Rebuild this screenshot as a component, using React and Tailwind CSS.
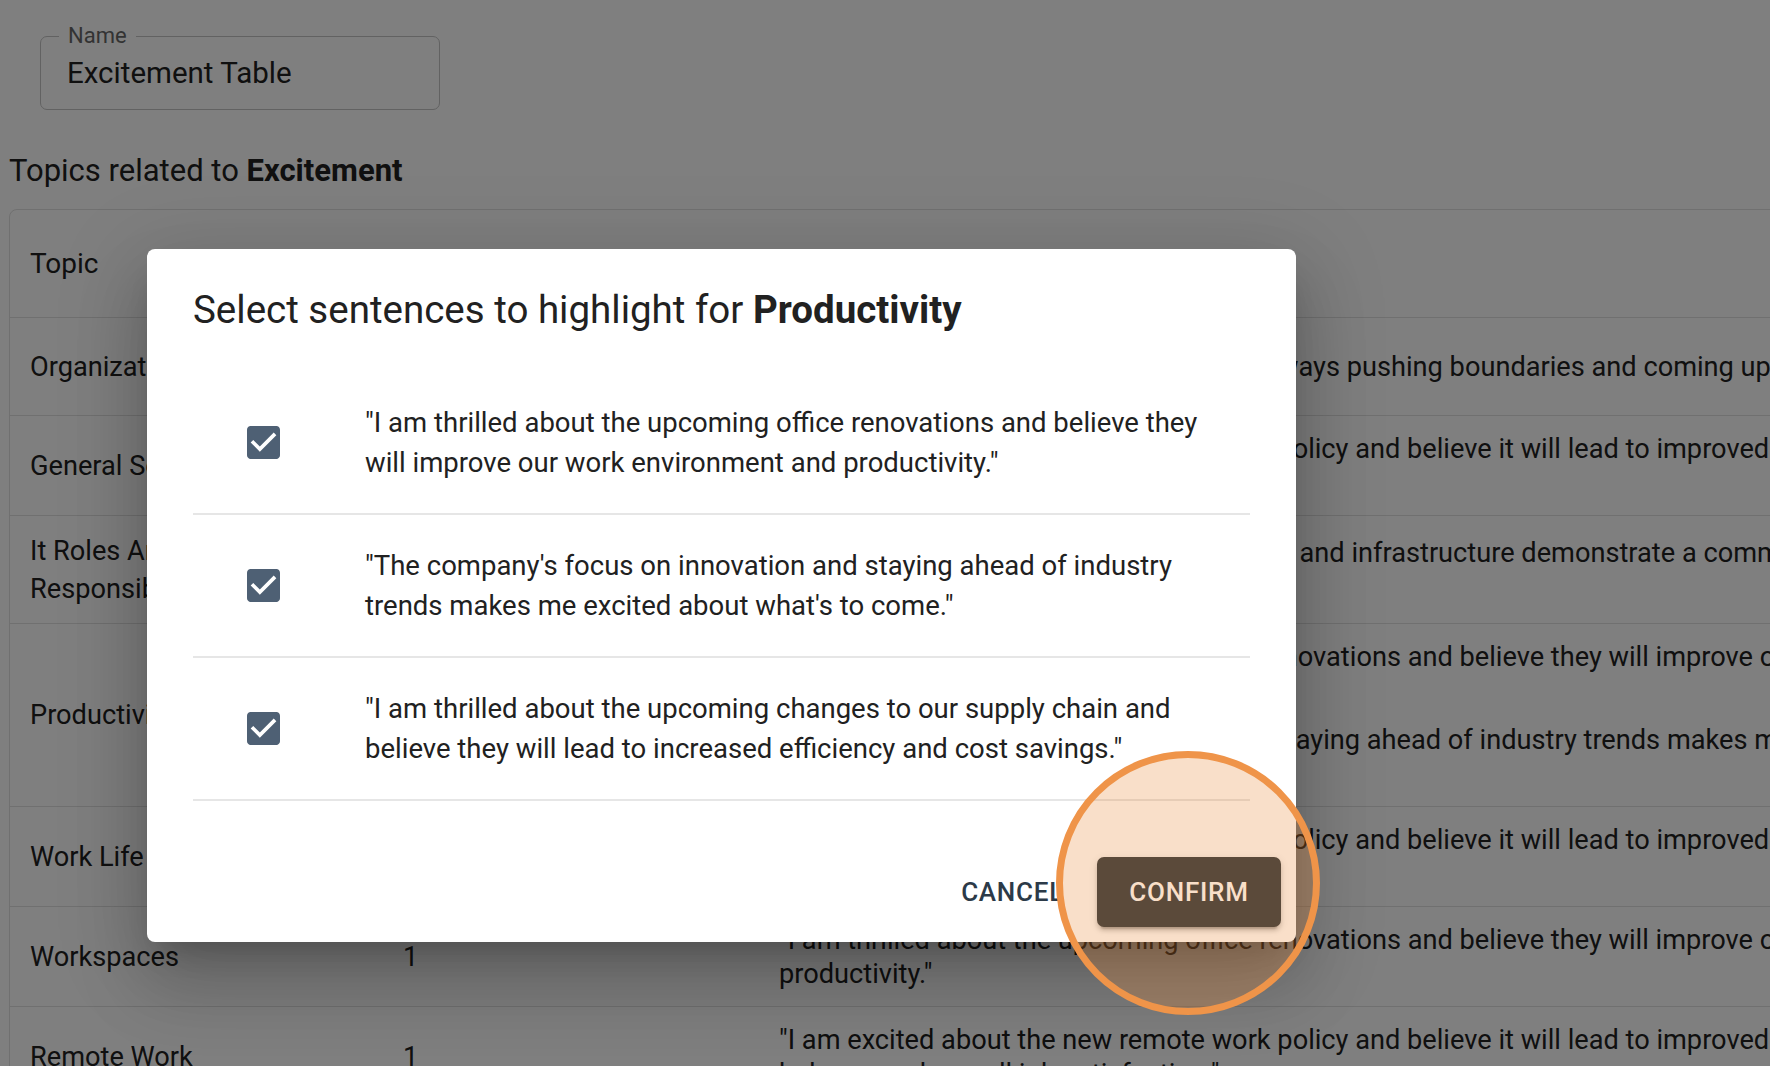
import React from 'react';

// lines of each sentence, broken where the table wraps them
const SENT_A = [
  '"I am excited about the new remote work policy and believe it will lead to improved work-life',
  'balance and overall job satisfaction."',
];
const SENT_B = [
  '"I am thrilled about the upcoming office renovations and believe they will improve our work environment and',
  'productivity."',
];
const SENT_C = [
  '"The company\'s focus on innovation and staying ahead of industry trends makes me excited about what\'s to',
  'come."',
];
const SENT_D = ['"I love working at an organization that\'s always pushing boundaries and coming up with new ideas."'];
const SENT_E = [
  '"The company\'s investments in technology and infrastructure demonstrate a commitment to innovation',
  'and long-term growth."',
];

const rows = [
  { topic: 'Organizational Culture', count: '1', height: 'h-[98px]', sentences: [SENT_D] },
  { topic: 'General Sentiment', count: '1', height: 'h-[100px]', sentences: [SENT_A] },
  { topic: 'It Roles And Responsibilities', count: '1', height: 'h-[108px]', sentences: [SENT_E] },
  { topic: 'Productivity', count: '2', height: 'h-[183px]', sentences: [SENT_B, SENT_C] },
  { topic: 'Work Life Balance', count: '1', height: 'h-[100px]', sentences: [SENT_A] },
  { topic: 'Workspaces', count: '1', height: 'h-[100px]', sentences: [SENT_B] },
  { topic: 'Remote Work', count: '1', height: 'h-[100px]', sentences: [SENT_A] },
];

const modalItems = [
  [
    '"I am thrilled about the upcoming office renovations and believe they',
    'will improve our work environment and productivity."',
  ],
  [
    '"The company\'s focus on innovation and staying ahead of industry',
    'trends makes me excited about what\'s to come."',
  ],
  [
    '"I am thrilled about the upcoming changes to our supply chain and',
    'believe they will lead to increased efficiency and cost savings."',
  ],
];

function CheckedBox() {
  return (
    <svg viewBox="3 3 18 18" className="h-[33px] w-[33px]">
      <path
        fill="#4e6074"
        d="M19 3H5c-1.11 0-2 .9-2 2v14c0 1.1.89 2 2 2h14c1.11 0 2-.9 2-2V5c0-1.1-.89-2-2-2zm-9 14l-5-5 1.41-1.41L10 14.17l7.59-7.59L19 8l-9 9z"
      />
    </svg>
  );
}

export default function App() {
  return (
    <div className="relative h-[1066px] w-[1770px] overflow-hidden bg-white pt-[36px] font-[Roboto,sans-serif] text-[#212121]">
      {/* name field */}
      <div className="relative ml-[40px] h-[74px] w-[400px] rounded-[7px] border border-[#c4c4c4]">
        <span className="absolute left-[18px] top-[-15px] bg-white px-[9px] text-[22px] leading-[28px] text-[#666666]">
          Name
        </span>
        <div className="flex h-full items-center pl-[26px] text-[29.5px]">Excitement Table</div>
      </div>

      <div className="ml-[9px] mt-[43px] text-[31px] leading-[36px]">
        Topics related to <span className="font-bold">Excitement</span>
      </div>

      {/* table */}
      <div className="ml-[9px] mt-[20px] w-[2400px] rounded-[8px] border border-[#e0e0e0]">
        <div className="flex h-[108px] items-center border-b border-[#e0e0e0] text-[28px]">
          <div className="w-[375px] shrink-0 pl-[20px]">Topic</div>
          <div className="w-[373px] shrink-0 pl-[18px]">Count</div>
          <div className="pl-[21px]">Sentences</div>
        </div>
        {rows.map((row) => (
          <div
            key={row.topic}
            className={`flex items-center border-b border-[#e0e0e0] text-[27.2px] ${row.height}`}
          >
            <div className="w-[375px] shrink-0 pl-[20px] pr-[35px] leading-[38px]">{row.topic}</div>
            <div className="w-[373px] shrink-0 pl-[18px] leading-[38px]">{row.count}</div>
            <div className="flex flex-col gap-[15px] whitespace-nowrap pl-[21px] leading-[34px]">
              {row.sentences.map((s, i) => (
                <div key={i}>
                  {s.map((line) => (
                    <div key={line}>{line}</div>
                  ))}
                </div>
              ))}
            </div>
          </div>
        ))}
      </div>

      {/* backdrop */}
      <div className="absolute inset-0 bg-black/50" />

      {/* dialog */}
      <div className="absolute left-[147px] top-[249px] flex h-[693px] w-[1149px] flex-col rounded-[8px] bg-white shadow-[0_20px_28px_-13px_rgba(0,0,0,0.2),0_44px_70px_6px_rgba(0,0,0,0.14),0_17px_85px_15px_rgba(0,0,0,0.12)]">
        <h2 className="px-[46px] pt-[39px] text-[38.5px] leading-[44px]">
          Select sentences to highlight for <span className="font-bold">Productivity</span>
        </h2>

        <div className="mx-[46px] mt-[40px]">
          {modalItems.map((lines) => (
            <div key={lines[0]} className="flex h-[143px] items-center border-b-2 border-[#e6e6e6]">
              <div className="flex w-[140px] shrink-0 justify-center">
                <CheckedBox />
              </div>
              <div className="whitespace-nowrap pl-[32px] text-[27.5px] leading-[39.5px]">
                {lines.map((l) => (
                  <div key={l}>{l}</div>
                ))}
              </div>
            </div>
          ))}
        </div>

        <div className="mt-[41px] flex justify-end gap-[17px] p-[15px]">
          <button className="h-[70px] rounded-[7px] px-[16px] text-[26px] font-medium tracking-[0.75px] text-[#2c3a48]">
            CANCEL
          </button>
          <button className="h-[70px] w-[184px] rounded-[7px] bg-[#2b363e] text-[26px] font-medium tracking-[0.75px] text-white shadow-[0_6px_2px_-4px_rgba(0,0,0,0.2),0_4px_4px_0_rgba(0,0,0,0.14),0_2px_9px_0_rgba(0,0,0,0.12)]">
            CONFIRM
          </button>
        </div>
      </div>

      {/* highlight annotation */}
      <div className="pointer-events-none absolute left-[1056px] top-[751px] h-[264px] w-[264px] rounded-full border-[7px] border-[#ef9449] bg-[rgba(232,131,46,0.26)]" />
    </div>
  );
}
